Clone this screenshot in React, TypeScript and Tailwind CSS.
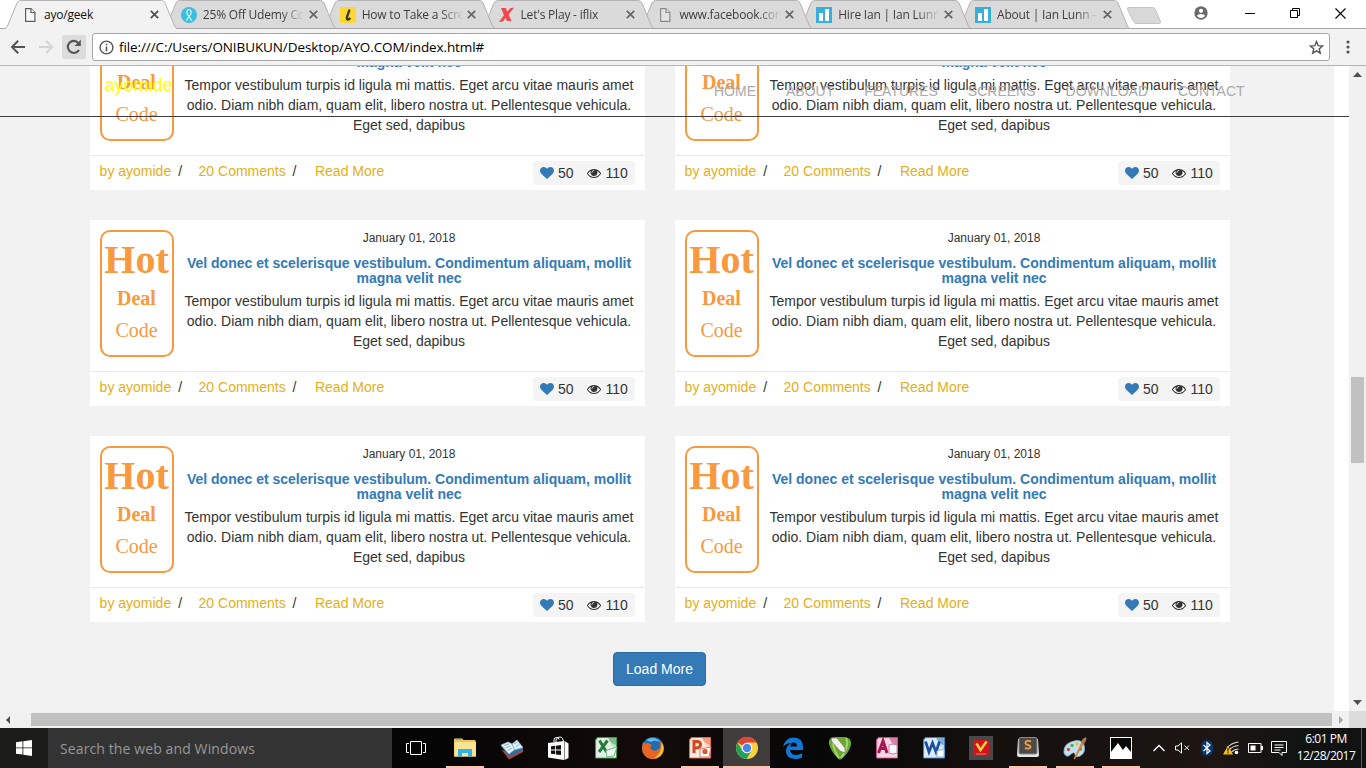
import React from 'react';

type Kids = { children?: React.ReactNode };

const chromeFont = "font-['Open_Sans','Noto_Sans',sans-serif]";

function PageIcon({ dim }: { dim?: boolean }) {
  return (
    <svg width="16" height="16" viewBox="0 0 16 16" fill={dim ? '#e4e4e4' : '#fafafa'} stroke={dim ? '#8c8c8c' : '#5c5c5c'} strokeWidth="1.2">
      <path d="M3.6 1.6H9L12.9 5.5V14.4H3.6Z" />
      <path d="M9 1.6V5.5H12.9" />
    </svg>
  );
}
function RibbonIcon() {
  return (
    <svg width="16" height="16" viewBox="0 0 16 16">
      <circle cx="8" cy="8" r="8" fill="#3cbfdf" />
      <path d="M5.2 13.6L9.7 7.2Q11 4.6 9.2 3Q8 2.2 6.8 3Q5 4.6 6.3 7.2L10.8 13.6" fill="none" stroke="#d5f2f9" strokeWidth="1.2" />
    </svg>
  );
}
function LIcon() {
  return (
    <svg width="16" height="16" viewBox="0 0 16 16">
      <rect width="16" height="16" fill="#fdd835" />
      <path d="M9.6 2.6L7.1 9.5Q6.4 12.8 8 12.6Q9.4 12.2 10.3 10.8" fill="none" stroke="#3b3520" strokeWidth="2.3" />
    </svg>
  );
}
function XIcon() {
  return (
    <svg width="16" height="16" viewBox="0 0 16 16">
      <path d="M2 1H6.8L8.3 4.7L11.2 1.2L15 .6L9.6 7.8L12.6 14H8L6.6 10.8L4 14.5L-.2 15L5 8.2Z" fill="#f2474c" />
    </svg>
  );
}
function BarsIcon() {
  return (
    <svg width="16" height="16" viewBox="0 0 16 16">
      <rect width="16" height="16" fill="#37aedb" />
      <path d="M3 6H7V14H3ZM9 2H13V14H9Z" fill="#fff" />
    </svg>
  );
}

const tabs: { title: string; icon: React.ReactNode }[] = [
  { title: 'ayo/geek', icon: <PageIcon /> },
  { title: '25% Off Udemy Co', icon: <RibbonIcon /> },
  { title: 'How to Take a Scree', icon: <LIcon /> },
  { title: "Let's Play - iflix", icon: <XIcon /> },
  { title: 'www.facebook.com', icon: <PageIcon dim /> },
  { title: 'Hire Ian | Ian Lunn', icon: <BarsIcon /> },
  { title: 'About | Ian Lunn -', icon: <BarsIcon /> },
];

function Tab({ title, icon, active, order }: { title: string; icon: React.ReactNode; active: boolean; order: number }) {
  return (
    <div className="relative h-[29px] w-[158.85px] shrink-0" style={{ zIndex: 10 - order }}>
      <svg className="absolute top-0 left-0 overflow-visible" width="172" height="29" viewBox="0 0 172 29">
        <path
          d="M0 28.5Q1.5 28 2.5 26L12 3Q13.2 .5 15.5 .5H156.5Q158.8 .5 160 3L169.5 26Q170.5 28 172 28.5"
          fill={active ? '#f2f2f2' : '#dadada'}
          stroke="#b4b2b4"
        />
        {active && <path d="M1 28.5H171" stroke="#f2f2f2" />}
        {!active && <path d="M0 28.5H172" stroke="#a9a7a9" />}
      </svg>
      <div className="relative flex h-full items-center pl-[17px]">
        <span className="flex w-[22px]">{icon}</span>
        <span
          className={
            'w-[100px] overflow-hidden text-[12px] leading-[16px] tracking-[-0.2px] whitespace-nowrap ' +
            (active ? 'text-[#111]' : 'text-[#3d3d3d] [mask-image:linear-gradient(to_right,#000_78px,transparent_102px)]')
          }
        >
          {title}
        </span>
        <svg className="ml-[5.8px]" width="9" height="9" viewBox="0 0 9 9" stroke={active ? '#4e4e4e' : '#666'} strokeWidth="1.7">
          <path d="M.8 .8L8.2 8.2M8.2 .8L.8 8.2" />
        </svg>
      </div>
    </div>
  );
}

function TabStrip() {
  return (
    <div className="flex h-[29px] items-start border-b border-[#a9a7a9] bg-white pl-[5px]">
      <div className="flex">
        {tabs.map((t, i) => (
          <Tab key={i} title={t.title} icon={t.icon} active={i === 0} order={i} />
        ))}
      </div>
      <svg className="mt-[6px] ml-[9px] shrink-0" width="36" height="19" viewBox="0 0 36 19">
        <path d="M3 1.5H26Q28.5 1.5 29.5 3.5L34.5 15.5Q35 17.5 33 17.5H11Q8.500 17.5 7.5 15.5L1.5 3.5Q1 1.5 3 1.5Z" fill="#d8d8d8" stroke="#c4c4c4" />
      </svg>
      <div className="flex flex-1 items-center pt-[6px] pl-[32.4px]">
        <svg width="14" height="14" viewBox="0 0 14 14">
          <circle cx="7" cy="7" r="6.7" fill="#6b6b6b" />
          <circle cx="7" cy="4.8" r="2.1" fill="#fff" />
          <path d="M2.8 9.8Q4 8 7 8T11.2 9.8Q9.7 12 7 12T2.8 9.8Z" fill="#fff" />
        </svg>
        <svg className="ml-[37px]" width="10" height="14" viewBox="0 0 10 14"><path d="M0 7.5H10" stroke="#000" /></svg>
        <svg className="ml-[35px]" width="10" height="10" viewBox="0 0 10 10" fill="none" stroke="#000">
          <path d="M.5 2.5H7.5V9.5H.5ZM2.5 2.5V.5H9.5V7.5H7.5" />
        </svg>
        <svg className="ml-[35px]" width="11" height="11" viewBox="0 0 11 11" stroke="#000" strokeWidth="1.1"><path d="M.5 .5L10.5 10.5M10.5 .5L.5 10.5" /></svg>
      </div>
    </div>
  );
}

function Toolbar() {
  return (
    <div className="flex h-[37px] items-center border-b border-[#b6b4b6] bg-[#f2f2f2] pl-[10px]">
      <svg width="16" height="16" viewBox="0 0 16 16" fill="none" stroke="#555" strokeWidth="2"><path d="M15 8H2.5M8.2 1.8L2 8L8.2 14.2" /></svg>
      <svg className="ml-[13px]" width="16" height="16" viewBox="0 0 16 16" fill="none" stroke="#d4d4d4" strokeWidth="2"><path d="M0 8H13M7 1.8L13.2 8L7 14.2" /></svg>
      <div className="ml-[7px] flex h-6 w-6 items-center justify-center rounded-[2px] bg-[#dcdcdc]">
        <svg width="16" height="16" viewBox="0 0 16 16"><path d="M13 11A6 6 0 1 1 12.4 4" fill="none" stroke="#555" strokeWidth="2.1" /><path d="M14.8 .8V7H8.6Z" fill="#555" /></svg>
      </div>
      <div className="ml-[6px] flex h-7 w-[1238px] items-center rounded-[3px] border border-[#a6a6a6] bg-white pr-[5.5px] pl-[5.5px]">
        <svg width="15" height="15" viewBox="0 0 15 15"><circle cx="7.5" cy="7.5" r="6.4" fill="none" stroke="#555" strokeWidth="1.4" /><path d="M7.5 6.6V11.2M7.5 3.7V5.3" stroke="#555" strokeWidth="1.6" /></svg>
        <span className="ml-[5.5px] flex-1 text-[13.5px] leading-5 tracking-[-0.1px] whitespace-nowrap text-black">file:///C:/Users/ONIBUKUN/Desktop/AYO.COM/index.html#</span>
        <svg width="15" height="15" viewBox="0 0 15 15"><path d="M7.5 1.6L9.2 5.7L13.6 6L10.2 8.9L11.3 13.2L7.5 10.8L3.7 13.2L4.8 8.9L1.4 6L5.8 5.7Z" fill="none" stroke="#555" strokeWidth="1.4" /></svg>
      </div>
      <svg className="ml-[16px]" width="4" height="14" viewBox="0 0 4 14" fill="#555"><circle cx="2" cy="2" r="1.6" /><circle cx="2" cy="7" r="1.6" /><circle cx="2" cy="12" r="1.6" /></svg>
    </div>
  );
}

function Card() {
  return (
    <article className="flex h-[186px] flex-col bg-white">
      <div className="flex h-[151px] pt-[10px] pl-[10px]">
        <div className="flex h-[127px] w-[74px] shrink-0 flex-col items-center rounded-[10px] border-2 border-[#f8993f] pt-[6px] pr-px font-['Liberation_Serif',serif] text-[#f8993f]">
          <strong className="h-[44px] text-[40px] leading-[44px] font-bold">Hot</strong>
          <strong className="mt-[5px] h-[22px] text-[20px] leading-[22px] font-bold">Deal</strong>
          <span className="mt-[10px] h-[22px] text-[20px] leading-[22px]">Code</span>
        </div>
        <div className="w-[470px] text-center text-[14px]">
          <p className="h-[17px] text-[12px] leading-[17px]">January 01, 2018</p>
          <h5 className="mt-[9px] px-[10px] leading-[15.4px] font-bold text-[#337ab7]">
            Vel donec et scelerisque vestibulum. Condimentum aliquam, mollit magna velit nec
          </h5>
          <p className="mt-[4px] px-[9px] leading-5">
            Tempor vestibulum turpis id ligula mi mattis. Eget arcu vitae mauris amet odio. Diam nibh diam, quam elit, libero nostra ut. Pellentesque vehicula. Eget sed, dapibus
          </p>
        </div>
      </div>
      <footer className="flex h-[35px] border-t border-[#e8e8e8] pr-[10px] pl-[9.6px] text-[14px] leading-5 text-[#333]">
        <div className="flex flex-1 pt-[5px] text-[#e6ae20]">
          <span className="w-[78.6px]">by ayomide</span>
          <span className="w-[20.4px] text-[#333]">/</span>
          <span className="w-[94px]">20 Comments</span>
          <span className="w-[22.4px] text-[#333]">/</span>
          <span>Read More</span>
        </div>
        <div className="mt-[5px] flex h-6 w-[102px] items-center rounded-[4px] bg-[#f4f4f4] pl-[7px]">
          <svg width="14" height="14" viewBox="0 0 1792 1792" fill="#337ab7">
            <path d="M896 1664q-26 0-44-18l-624-602q-10-8-27.5-26t-55.5-65.5-68-97.5-53.5-121-23.5-138q0-220 127-344t351-124q62 0 126.5 21.5t120 58 95.5 68.5 76 68q36-36 76-68t95.5-68.5 120-58 126.5-21.5q224 0 351 124t127 344q0 221-229 450l-623 600q-18 18-44 18z" />
          </svg>
          <span className="ml-[4px]">50</span>
          <svg className="ml-[13.4px]" width="14" height="14" viewBox="0 0 1792 1792" fill="#333">
            <path d="M1664 960q-152-236-381-353 61 104 61 225 0 185-131.500 316.500t-316.500 131.500-316.500-131.500-131.500-316.500q0-121 61-225-229 117-381 353 133 205 333.500 326.500t434.500 121.500 434.500-121.500 333.500-326.500zm-720-384q0-20-14-34t-34-14q-125 0-214.500 89.500t-89.500 214.500q0 20 14 34t34 14 34-14 14-34q0-86 61-147t147-61q20 0 34-14t14-34zm848 384q0 34-20 69-140 230-376.500 368.500t-499.500 138.500-499.500-139-376.500-368q-20-35-20-69t20-69q140-229 376.500-368t499.500-139 499.500 139 376.500 368q20 35 20 69z" />
          </svg>
          <span className="ml-[4.6px]">110</span>
        </div>
      </footer>
    </article>
  );
}

function SiteNav() {
  return (
    <nav className="absolute top-0 left-0 flex h-[51px] w-[1349px] border-b border-[#403c40] pl-[104.6px]">
      <span className="w-[609.4px] pt-[9px] text-[18px] leading-5 text-[#ffff00]">ayomide</span>
      <ul className="flex gap-[30px] pt-[15px] text-[14px] leading-5 text-[#aaa]">
        <li>HOME</li><li>ABOUT</li><li>FEATURES</li><li>SCREENS</li><li>DOWNLOAD</li><li>CONTACT</li>
      </ul>
    </nav>
  );
}

function Viewport() {
  return (
    <div className="flex h-[645px]">
      <main className="relative h-[645px] w-[1349px] overflow-hidden bg-white font-['Liberation_Sans',Arial,sans-serif] text-[#333]">
        <div className="h-full w-[1334px] overflow-hidden bg-[#f2f2f2]">
          <div className="-mt-[62px] ml-[90px] w-[1140px]">
            <div className="grid grid-cols-2 gap-[30px]">
              {[0, 1, 2, 3, 4, 5].map((i) => <Card key={i} />)}
            </div>
            <div className="mt-[30px] flex justify-center pr-[1px]">
              <button className="h-[34px] w-[93px] rounded-[4px] border border-[#2e6da4] bg-[#337ab7] text-[14px] leading-5 text-white">Load More</button>
            </div>
          </div>
        </div>
        <SiteNav />
      </main>
      <div className="flex w-[17px] flex-col items-center bg-[#f1f1f1] pt-[6px] pb-[6px]">
        <svg width="9" height="5" viewBox="0 0 9 5" fill="#505050"><path d="M0 5L4.500 0L9 5Z" /></svg>
        <div className="mt-[300px] h-[86px] w-[13px] bg-[#c1c1c1]" />
        <svg className="mt-auto" width="9" height="5" viewBox="0 0 9 5" fill="#505050"><path d="M0 0L4.500 5L9 0Z" /></svg>
      </div>
    </div>
  );
}

function BottomScroll() {
  return (
    <div className="flex h-[17px] items-center bg-[#f1f1f1] pl-[6px]">
      <svg width="4" height="8" viewBox="0 0 4 8" fill="#505050"><path d="M4 0V8L0 4Z" /></svg>
      <div className="ml-[21px] h-[13px] w-[1301px] bg-[#c1c1c1]" />
      <svg className="ml-[7px]" width="4" height="8" viewBox="0 0 4 8" fill="#a3a3a3"><path d="M0 0V8L4 4Z" /></svg>
      <div className="ml-auto h-[17px] w-[17px] bg-[#dcdcdc]" />
    </div>
  );
}

function Ico({ children }: Kids) {
  return <svg width="24" height="24" viewBox="0 0 24 24">{children}</svg>;
}

function OfficeIcon({ dark, mid, light, children }: Kids & { dark: string; mid: string; light: string }) {
  return (
    <Ico>
      <path d="M3.500 1.500H22.500V22H1.500V4Z" fill={light} stroke={mid} />
      <path d="M3 3L15 2Q16 10 22 13V21.500H2Z" fill="#fff" opacity=".5" />
      <path d="M14 2H22V9Q17 8 14 2Z" fill={mid} opacity=".5" />
      <g fill="none" stroke={dark} strokeWidth="3">{children}</g>
    </Ico>
  );
}

const apps: { icon: React.ReactNode; state?: 'open' | 'active' }[] = [
  {
    state: 'open',
    icon: (
      <Ico>
        <path d="M1 3.500Q1 2.500 2 2.500H9L10.500 4H22.500V20.500H1Z" fill="#f4c64f" />
        <path d="M1.500 6H23V20.500H1.500Z" fill="#fde391" />
        <path d="M3 3.500H8" stroke="#56c2e8" strokeWidth="1.400" />
        <path d="M5 13H19V20.500H15V17H9V20.500H5Z" fill="#2bb5ec" />
      </Ico>
    ),
  },
  {
    icon: (
      <Ico>
        <path d="M1 13L9 23.500L23 16V12L9 18Z" fill="#b9432c" />
        <path d="M1 10L9 21L23.500 14L21 10Z" fill="#2b6fa5" />
        <path d="M1 9L8 6L12 8L17 4L23 11.500L14 14L9 18Z" fill="#e9f4f9" stroke="#8bb8cc" strokeWidth=".7" />
        <path d="M12 8L14.500 14M4 9.500L9 8M5.500 12L10.500 10M8 14.500L12 12M14 8L17.500 6M15.500 11L19.500 8.500" stroke="#7ba7bf" strokeWidth=".9" />
      </Ico>
    ),
  },
  {
    icon: (
      <Ico>
        <path d="M7 6V4Q7 1.500 9.500 1.500Q11.500 1.500 12 3.500M9 6V4Q10 .8 13 1Q16 1 16.500 6" fill="none" stroke="#fff" />
        <path d="M1 7L17 5V24L1 21.500ZM17.500 5L21.500 7.500V22L17.500 24Z" fill="#fff" />
        <path d="M4 10.300L8.200 9.800V13.500H4ZM9 9.700L14 9V13.500H9ZM4 14.500H8.200V18.300L4 17.800ZM9 14.500H14V19L9 18.400Z" fill="#111" />
      </Ico>
    ),
  },
  {
    icon: (
      <OfficeIcon dark="#267b3f" mid="#3b9a52" light="#c3e3c6">
        <path d="M5.500 4.500L12.500 16M13.500 4.500L5 16" />
        <path d="M12 14.500L23 11L20 20L13 21Z" fill="#edf8ee" stroke="#73b681" strokeWidth="1" />
      </OfficeIcon>
    ),
  },
  {
    icon: (
      <Ico>
        <circle cx="12" cy="12" r="11" fill="#206db5" />
        <path d="M5 4Q14-1 20 7Q15 3 10 6Z" fill="#64bde8" />
        <path d="M2 6Q4 8 7 7L11 9L9 12Q13 17 18 13Q21 9 18 4Q25 10 22 17Q18 24 10 23Q1 21 1 12Z" fill="#e96522" />
        <path d="M20 6Q25 12 20 19Q17 22 13 22.500Q22 16 20 6Z" fill="#ffc532" />
      </Ico>
    ),
  },
  {
    state: 'open',
    icon: (
      <OfficeIcon dark="#d04a20" mid="#e46b3c" light="#f9d2c0">
        <path d="M6 17V5.500H9Q12.500 5.500 12.500 8.700Q12.500 12 7 12" />
        <path d="M12 13L23 11L21 21H12Z" fill="#fff" stroke="#e37956" strokeWidth="1" />
        <circle cx="17" cy="15.500" r="1.800" fill="#e46b3c" strokeWidth="1.500" />
      </OfficeIcon>
    ),
  },
  {
    state: 'active',
    icon: (
      <Ico>
        <circle cx="12" cy="12" r="11" fill="#fbd03e" />
        <path d="M12 12L2.500 6.500A11 11 0 0 1 21.600 6.600H12Z" fill="#e04437" />
        <path d="M2.500 6.500A11 11 0 0 0 11.500 23L16.700 14.500L12 12L7.300 14.700Z" fill="#22a15a" />
        <circle cx="12" cy="12" r="5.300" fill="#fff" />
        <circle cx="12" cy="12" r="4.200" fill="#4a86ee" />
      </Ico>
    ),
  },
  {
    icon: (
      <Ico>
        <path d="M2 11Q4 1.500 13 1.500Q22 2 22 11V14H9Q9.500 19 15 19Q18 19 21 17.300V21.500Q18 23 14 23Q5 22.500 5 15Q5 9.500 10.500 7Q5 7 2 11ZM9.200 10.500H16Q16 6.500 12.700 6.500Q9.700 6.500 9.200 10.500Z" fill="#0e78d7" fillRule="evenodd" />
      </Ico>
    ),
  },
  {
    icon: (
      <Ico>
        <path d="M1 8Q0 1 8 1H17Q24 2 23 9Q21 17 13 23.500H11Q3 16 1 8Z" fill="#68a934" />
        <path d="M5 2Q4 12 11 22M18 2Q22 9 13 22" stroke="#aad366" strokeWidth="2" fill="none" />
        <path d="M3 2H9L17 12V17L12 15L4 6Z" fill="#f3f4ed" stroke="#74845c" strokeWidth=".8" />
      </Ico>
    ),
  },
  {
    icon: (
      <OfficeIcon dark="#a31853" mid="#cd4b87" light="#f0aeca">
        <path d="M3.500 17L8 5L12 17M5 12.500H11" />
        <path d="M14 9V17Q18 19 22 17V9Q18 7 14 9Z" fill="#fff" stroke="#d47aa3" strokeWidth="1" />
      </OfficeIcon>
    ),
  },
  {
    icon: (
      <OfficeIcon dark="#17509c" mid="#4381bd" light="#bcd8f2">
        <path d="M3.500 5.500L7 16L10.500 7L14 16L17.500 5.500" strokeWidth="2.700" />
        <path d="M15 15L22 13V21H15Z" fill="#fff" stroke="#87b3dd" strokeWidth="1" />
      </OfficeIcon>
    ),
  },
  {
    icon: (
      <Ico>
        <rect width="24" height="24" fill="#484848" />
        <rect x="4" y="4" width="16" height="16" rx="3" fill="#d2151c" />
        <path d="M7.500 7.500L11.500 14L17.500 5.500" fill="none" stroke="#ffd53b" strokeWidth="2.400" />
        <path d="M7 18H17" stroke="#f59689" strokeWidth=".8" />
      </Ico>
    ),
  },
  {
    state: 'open',
    icon: (
      <Ico>
        <path d="M2 3L1 19Q1 21 3 21H21Q23 21 23 19L22 3Z" fill="#e3e3e3" />
        <rect x="3" y="1.500" width="18" height="16.500" rx="1.500" fill="#4a4a4a" stroke="#8b8b8b" />
        <path d="M15 5.500Q9.500 3.500 9.500 6.800Q9.500 8.500 12 9Q15 9.500 14.500 11.500Q13 13.500 9 12" fill="none" stroke="#f3983c" strokeWidth="1.900" />
      </Ico>
    ),
  },
  {
    state: 'open',
    icon: (
      <Ico>
        <path d="M1 17Q0 9 8 6Q18 2 21 9Q23 17 17 20Q12 22 12 18Q11 15 7 19Q3 22 1 17Z" fill="#c3e0f1" stroke="#86b9d8" strokeWidth=".8" />
        <circle cx="5.500" cy="13.500" r="1.700" fill="#d9453c" /><circle cx="9" cy="9.500" r="1.700" fill="#51ab48" /><circle cx="14" cy="8" r="1.700" fill="#edbc35" /><circle cx="17.500" cy="13" r="1.700" fill="#3f82c7" />
        <path d="M10.500 23L18 7L20.500 8.500L12 23Z" fill="#d88933" />
        <path d="M18 7Q18 3 23 1L23.500 3Q22.500 7 20.500 8.500Z" fill="#a57850" />
      </Ico>
    ),
  },
  {
    state: 'open',
    icon: (
      <Ico>
        <rect x="1.500" y="1.500" width="21" height="21" fill="#080808" stroke="#fff" />
        <path d="M2 16L9 7L14 14L17 10L22 16V22H2Z" fill="#fff" />
      </Ico>
    ),
  },
];

function Taskbar() {
  return (
    <div className={'flex h-10 items-stretch bg-[linear-gradient(90deg,#050505_0,#050505_440px,#120b09_640px,#080707_820px,#14100e_1000px,#1d1613_1220px,#111313_1300px)] text-white ' + chromeFont}>
      <div className="flex w-12 items-center justify-center bg-[#1b1b1a]">
        <svg width="16" height="16" viewBox="0 0 16 16" fill="#fff"><path d="M0 2.200L6.500 1.300V7.500H0ZM7.300 1.200L16 0V7.500H7.300ZM0 8.300H6.500V14.600L0 13.700ZM7.300 8.300H16V16L7.300 14.700Z" /></svg>
      </div>
      <div className="flex w-[344px] items-center bg-[#333] pl-3 text-[14px] text-[#979797]">
        <span className="tracking-[0.11px]">Search the web and Windows</span>
      </div>
      <div className="flex w-[50px] items-center pl-[14px]">
        <svg width="20" height="14" viewBox="0 0 20 14" fill="none" stroke="#fff"><path d="M4.500 .5H15.500V13.500H4.500ZM3 2.500H.5V11.500H3M17 2.500H19.500V11.500H17" /></svg>
      </div>
      <div className="flex w-[703.5px]">
        {apps.map((a, i) => (
          <div key={i} className={'flex w-[46.86px] shrink-0 flex-col items-center pt-2 ' + (a.state === 'active' ? 'bg-[#403d3c]' : '')}>
            {a.icon}
            {a.state && <div className={'mt-auto h-[2px] bg-[#fbc3ae] ' + (a.state === 'active' ? 'w-full' : 'w-[38px]')} />}
          </div>
        ))}
      </div>
      <div className="flex flex-1 items-center pl-[7.500px]">
        <svg width="12" height="8" viewBox="0 0 12 8" fill="none" stroke="#fff" strokeWidth="1.300"><path d="M.5 7L6 1.500L11.500 7" /></svg>
        <svg className="ml-[10px]" width="15" height="12" viewBox="0 0 15 12" fill="none" stroke="#fff"><path d="M.5 4H3L6.500 .8V11.200L3 8H.5ZM9.500 3.500L14 8M14 3.500L9.500 8" /></svg>
        <svg className="ml-[11px]" width="12" height="16" viewBox="0 0 12 16"><rect width="12" height="16" rx="6" fill="#07376f" /><path d="M2.500 5L9 11L6 13.500V2.500L9 5L2.500 11" fill="none" stroke="#fff" strokeWidth="1.200" /></svg>
        <svg className="ml-[10px]" width="17" height="16" viewBox="0 0 17 16">
          <path d="M4 8Q8 3 15.500 2M6 10Q10 6 15.500 5.500M8.500 12Q11.500 9 15.500 9" fill="none" stroke="#ddd" strokeWidth="1.200" />
          <circle cx="13.500" cy="12.500" r="1.800" fill="#fff" />
          <path d="M5 5.500L10 14.500H0Z" fill="#fdbb16" /><path d="M5 8V11.500M5 12.300V13.500" stroke="#221b00" strokeWidth="1.200" />
        </svg>
        <svg className="ml-[8px]" width="15" height="10" viewBox="0 0 15 10"><path d="M.5 .5H13V9.500H.5Z" fill="none" stroke="#fff" /><path d="M2.500 2.500H7.500V7.500H2.500ZM13 3H15V7H13Z" fill="#fff" /></svg>
        <svg className="ml-[8px]" width="16" height="16" viewBox="0 0 16 16" fill="none" stroke="#fff"><path d="M.5 1.500H15.500V12.500H11V15.500L8 12.500H.5ZM3.500 5H12.500M3.500 7.500H12.500M3.500 10H9.500" /></svg>
        <div className="ml-[5.5px] -mt-[2px] w-[67px] text-center text-[12px] leading-[17px] tracking-[-0.500px] whitespace-nowrap"><div>6:01 PM</div><div>12/28/2017</div></div>
      </div>
      <div className="w-[5px] border-l border-[#5b5b5b]" />
    </div>
  );
}

export default function App() {
  return (
    <div className="flex h-[768px] w-[1366px] flex-col overflow-hidden bg-[#f2f2f2]">
      <div className={chromeFont}>
        <TabStrip />
        <Toolbar />
      </div>
      <Viewport />
      <BottomScroll />
      <Taskbar />
    </div>
  );
}
